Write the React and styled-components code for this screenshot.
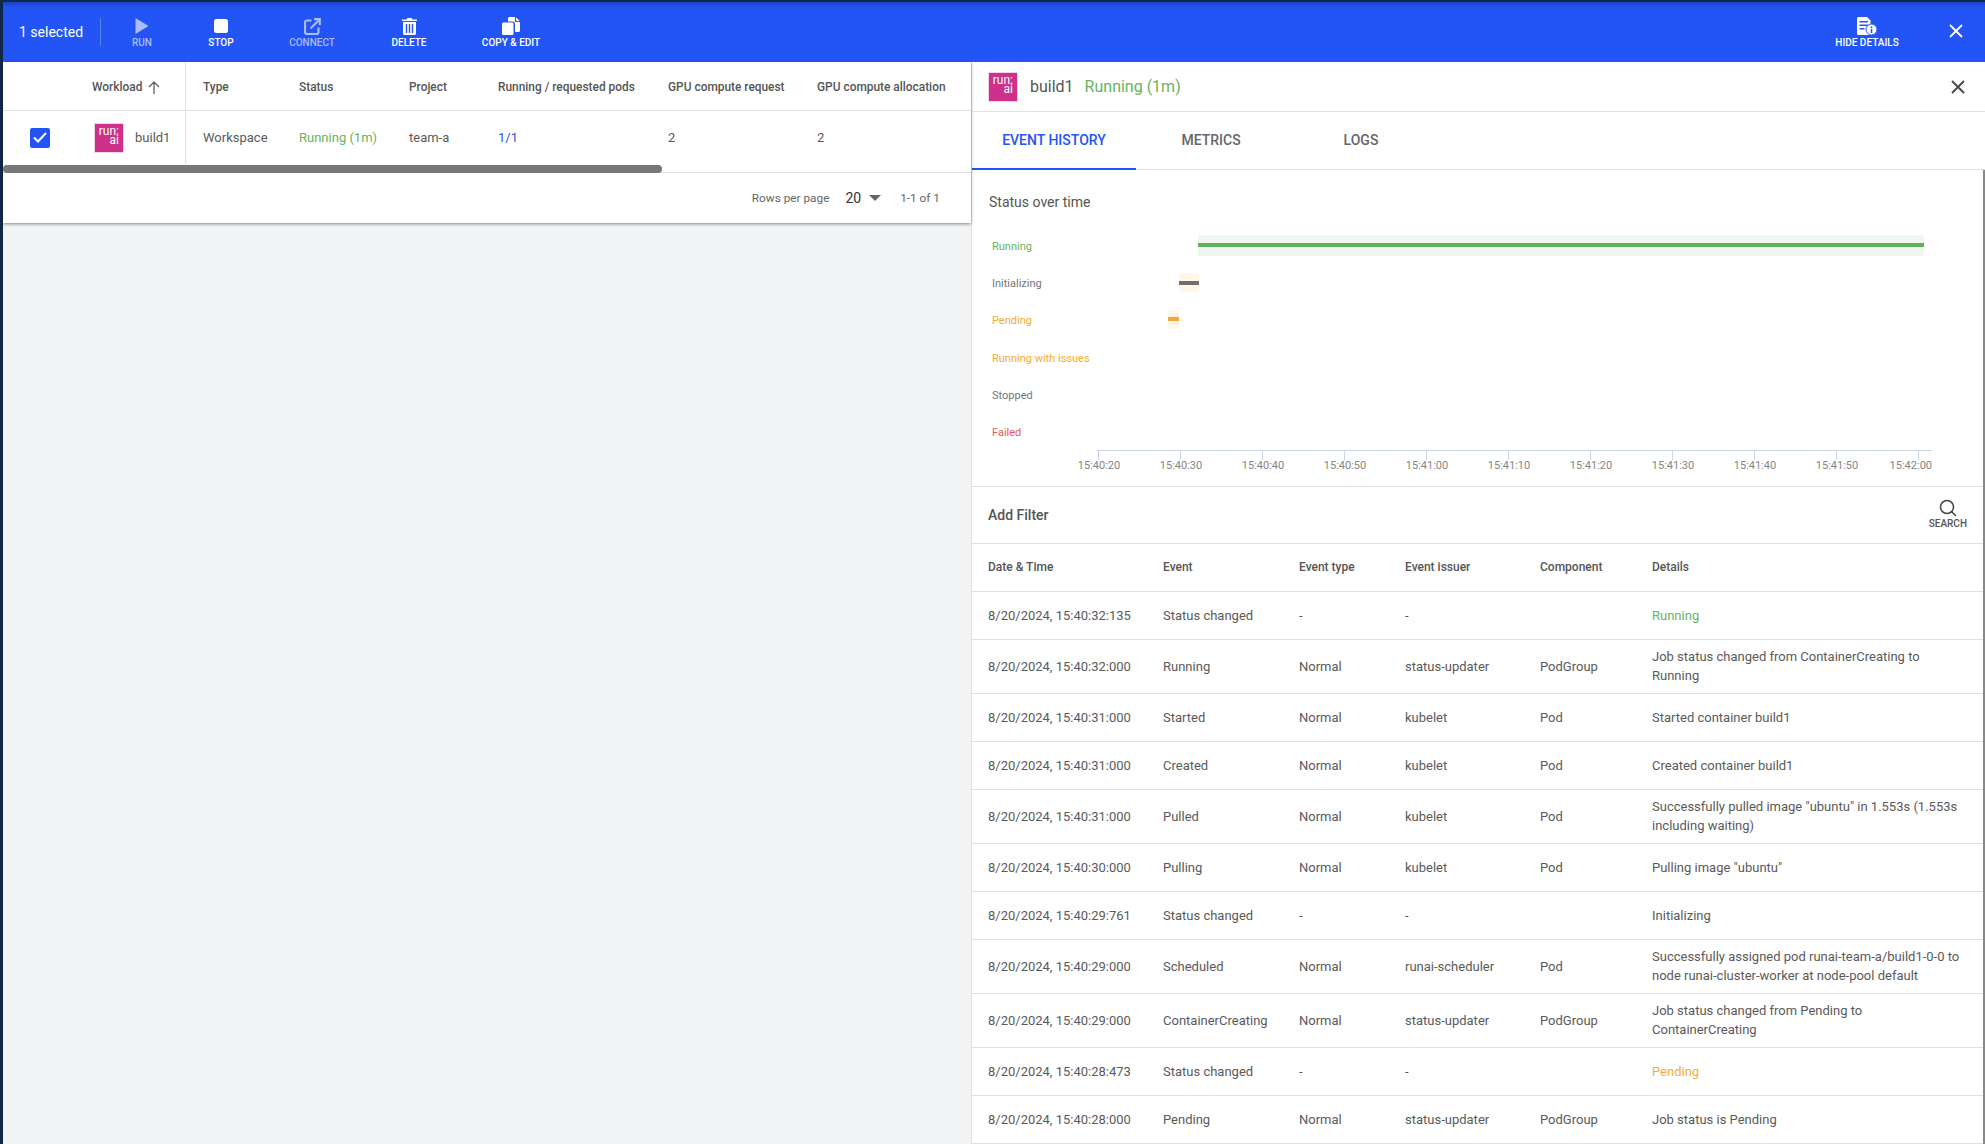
import React from 'react';
import styled, { createGlobalStyle } from 'styled-components';

const GlobalStyle = createGlobalStyle`
    html, body {
        margin: 0;
        height: 100%;
        overflow: hidden;
    }
    body {
        font-family: Roboto, "Liberation Sans", sans-serif;
    }
    * {
        box-sizing: border-box;
    }
`;

const PageWrapper = styled.div`
    display: flex;
    flex-direction: column;
    height: 1144px;
    border-top: 2px solid #10284a;
    border-left: 3px solid #10284a;
    background: #f2f3f5;
`;

const ToolbarWrapper = styled.div`
    display: flex;
    align-items: flex-start;
    flex: 0 0 60px;
    padding-left: 16px;
    background: #2354f5;
    box-shadow: inset 0 5px 4px -3px rgba(10, 30, 90, 0.35);
    color: #fff;
`;

const SelectedLabel = styled.div`
    width: 82px;
    height: 28px;
    margin: 16px 5px 0 0;
    border-right: 1px solid rgba(255, 255, 255, 0.25);
    font-size: 14px;
    line-height: 28px;
`;

const ToolButton = styled.div`
    display: flex;
    flex-direction: column;
    align-items: center;
    width: ${({ $width }) => $width}px;
    padding-top: 14px;
    color: ${({ $disabled }) => ($disabled ? '#a9bdfb' : '#fff')};
    font-size: 10px;
    font-weight: 500;
    line-height: 14px;
    text-transform: uppercase;
`;

const ToolIcon = styled.div`
    display: flex;
    align-items: center;
    justify-content: center;
    height: 20px;
`;

const ToolSpacer = styled.div`
    flex: 1;
`;

const ToolClose = styled.div`
    display: flex;
    justify-content: center;
    width: 24px;
    margin: 22px 17px 0 27px;
`;

const ContentWrapper = styled.div`
    display: flex;
    flex: 1;
    min-height: 0;
`;

const ListColumn = styled.div`
    flex: 0 0 968px;
`;

const ListCard = styled.div`
    position: relative;
    height: 161px;
    background: #fff;
    box-shadow: 0 1px 3px rgba(0, 0, 0, 0.45);
`;

const ListRow = styled.div`
    display: grid;
    grid-template-columns: 89px 94px 113px 110px 89px 170px 149px 1fr;
    align-items: stretch;
    height: ${({ $height }) => $height}px;
    padding-bottom: ${({ $gutter }) => $gutter || 0}px;
    border-bottom: 1px solid #e0e0e0;
`;

const ListHead = styled.div`
    display: flex;
    align-items: center;
    gap: 6px;
    padding: 2px 0 0 ${({ $pad }) => $pad || 0}px;
    border-right: ${({ $divider }) => ($divider ? '1px solid #e0e0e0' : 'none')};
    color: #555;
    font-size: 11.9px;
    font-weight: 500;
`;

const ListCell = styled.div`
    display: flex;
    align-items: center;
    justify-content: ${({ $center }) => ($center ? 'center' : 'flex-start')};
    gap: 11px;
    padding-left: ${({ $pad }) => $pad || 0}px;
    border-right: ${({ $divider }) => ($divider ? '1px solid #e0e0e0' : 'none')};
    color: ${({ $color }) => $color || '#5a5a5a'};
    font-size: 13px;
`;

const Checkbox = styled.div`
    display: flex;
    align-items: center;
    justify-content: center;
    width: 20px;
    height: 20px;
    margin: 0 15px 0 0;
    border-radius: 2px;
    background: #2354f5;
`;

const Logo = styled.div`
    display: flex;
    flex: 0 0 30px;
    flex-direction: column;
    align-items: flex-end;
    justify-content: center;
    width: 30px;
    height: 30px;
    padding: 0 4px 3px 0;
    border: 1px solid #f3d3e6;
    background: #cd3189;
    color: #fff;
    font-size: 12px;
    line-height: 9px;
`;

const ScrollThumb = styled.div`
    position: absolute;
    left: 0;
    top: 103px;
    width: 659px;
    height: 8px;
    border-radius: 4px;
    background: #777;
`;

const ListFooter = styled.div`
    display: flex;
    align-items: center;
    justify-content: flex-end;
    height: 50px;
    padding-right: 31px;
    color: #666;
    font-size: 11.8px;
`;

const PageSize = styled.span`
    margin: 0 8px 0 16px;
    color: #333;
    font-size: 14px;
`;

const Caret = styled.span`
    width: 0;
    height: 0;
    margin-right: 19px;
    border-left: 6px solid transparent;
    border-right: 6px solid transparent;
    border-top: 6px solid #666;
`;

const DetailPanel = styled.div`
    flex: 1;
    min-width: 0;
    overflow: hidden;
    border-left: 1px solid #e0e0e0;
    background: #fff;
`;

const DetailHeader = styled.div`
    display: flex;
    align-items: center;
    height: 50px;
    padding: 0 20px 0 16px;
    border-bottom: 1px solid #e0e0e0;
    font-size: 16px;
`;

const DetailName = styled.span`
    margin: 0 11px 0 12px;
    color: #555;
`;

const DetailStatus = styled.span`
    flex: 1;
    color: #66b35f;
`;

const TabsRow = styled.div`
    display: flex;
    height: 58px;
    border-bottom: 1px solid #e0e0e0;
`;

const Tab = styled.div`
    display: flex;
    align-items: center;
    justify-content: center;
    width: ${({ $width }) => $width}px;
    height: 58px;
    border-bottom: 2px solid ${({ $active }) => ($active ? '#2354f5' : 'transparent')};
    color: ${({ $active }) => ($active ? '#2354f5' : '#666')};
    font-size: 14px;
    font-weight: 500;
`;

const PanelBody = styled.div`
    height: 974px;
    border-right: 2px solid #888;
`;

const ChartSection = styled.div`
    height: 317px;
    padding-top: 22px;
    border-bottom: 1px solid #e0e0e0;
`;

const ChartTitle = styled.div`
    padding-left: 17px;
    color: #555;
    font-size: 14px;
    line-height: 20px;
`;

const ChartGrid = styled.div`
    display: grid;
    grid-template-columns: 118px 1fr;
    margin-top: 15px;
`;

const ChartLabels = styled.div`
    display: flex;
    flex-direction: column;
    padding: 1px 0 0 20px;
    white-space: nowrap;
`;

const ChartLabel = styled.div`
    height: 37.2px;
    color: ${({ $color }) => $color};
    font-size: 11px;
    line-height: 37px;
`;

const ChartSvg = styled.svg`
    overflow: visible;
`;

const FilterBar = styled.div`
    display: flex;
    align-items: center;
    justify-content: space-between;
    height: 57px;
    padding: 0 16px 0 16px;
    border-bottom: 1px solid #e0e0e0;
    color: #555;
    font-size: 14px;
    font-weight: 500;
`;

const SearchButton = styled.div`
    display: flex;
    flex-direction: column;
    align-items: center;
    color: #555;
    font-size: 10px;
    font-weight: 500;
    line-height: 14px;
`;

const EventRow = styled.div`
    display: grid;
    grid-template-columns: 175px 136px 106px 135px 112px 312px;
    align-items: center;
    height: ${({ $tall }) => ($tall ? 54 : 48)}px;
    padding-left: 16px;
    border-bottom: 1px solid #e0e0e0;
    color: #5a5a5a;
    font-size: 13px;
    line-height: 19px;
`;

const EventHead = styled(EventRow)`
    color: #555;
    font-size: 12px;
    font-weight: 500;
`;

const Details = styled.div`
    padding-bottom: ${({ $tall }) => ($tall ? 2 : 0)}px;
    color: ${({ $color }) => $color || 'inherit'};
`;

const RunIcon = () => (
    <svg width="14" height="16" viewBox="0 0 14 16">
        <path d="M0.5 0 L13.5 8 L0.5 16 Z" fill="currentColor" />
    </svg>
);

const StopIcon = () => (
    <svg width="14" height="14" viewBox="0 0 14 14">
        <rect width="14" height="14" rx="2.5" fill="currentColor" />
    </svg>
);

const ConnectIcon = () => (
    <svg width="17" height="17" viewBox="0 0 17 17" fill="none" stroke="currentColor" strokeWidth="2.200">
        <path d="M7.500 2.500H3c-1.100 0-2 .9-2 2V14c0 1.100.9 2 2 2h9.500c1.100 0 2-.9 2-2V9.500" />
        <path d="M6.500 10.500 L15 2 M10 1.200 H15.800 V7" />
    </svg>
);

const DeleteIcon = () => (
    <svg width="15" height="18" viewBox="0 0 15 18" fill="currentColor">
        <path d="M0 2.500h4.500L5.500 1h4l1 1.500H15V4H0z" />
        <path
            fillRule="evenodd"
            d="M1 5h13v11.500c0 .8-.7 1.500-1.500 1.500h-10C1.700 18 1 17.300 1 16.500zM3.800 7v9h1.400V7zM6.800 7v9h1.400V7zM9.800 7v9h1.400V7z"
        />
    </svg>
);

const CopyIcon = () => (
    <svg width="18" height="18" viewBox="0 0 18 18" fill="currentColor">
        <path d="M7.500 0H13v5h5v8.500c0 .8-.7 1.500-1.500 1.500H13V7c0-1.500-1-2.500-2.500-2.500H6V1.500C6 .7 6.700 0 7.500 0z" />
        <path d="M14 0.300 L17.700 4 H14z" />
        <path d="M1.500 5.500h8.500c.8 0 1.500.7 1.500 1.500v9.500c0 .8-.7 1.500-1.500 1.500H1.500C.7 18 0 17.300 0 16.500V7c0-.8.7-1.500 1.500-1.500z" />
    </svg>
);

const DetailsIcon = () => (
    <svg width="20" height="18" viewBox="0 0 20 18">
        <path
            d="M1.500 0H10l3.500 3.500V16.500c0 .8-.7 1.500-1.500 1.500H1.500C.7 18 0 17.300 0 16.500V1.500C0 .7.700 0 1.500 0z"
            fill="#fff"
        />
        <path d="M2.500 4h8.500v1.500H2.500zM2.500 7.500h8.500V9H2.500zM2.500 11h5v1.500h-5z" fill="#2354f5" />
        <circle cx="14.500" cy="12.500" r="5.500" fill="#fff" stroke="#2354f5" strokeWidth="1" />
        <path d="M13.700 9.500h1.600v1.500h-1.600zM13.700 11.800h1.600V16h-1.600z" fill="#2354f5" />
    </svg>
);

const CloseIcon = ({ color }) => (
    <svg width="14" height="14" viewBox="0 0 14 14" stroke={color} strokeWidth="1.800" fill="none">
        <path d="M1 1 L13 13 M13 1 L1 13" />
    </svg>
);

const SortArrow = () => (
    <svg width="12" height="13" viewBox="0 0 12 13" stroke="#555" strokeWidth="1.200" fill="none">
        <path d="M6 13 V1 M1 6 L6 1 L11 6" />
    </svg>
);

const CheckMark = () => (
    <svg width="14" height="11" viewBox="0 0 14 11" stroke="#fff" strokeWidth="2" fill="none">
        <path d="M1 5.500 L5 9.500 L13 1" />
    </svg>
);

const SearchIcon = () => (
    <svg width="18" height="18" viewBox="0 0 18 18" stroke="#444" strokeWidth="1.500" fill="none">
        <circle cx="8" cy="8" r="6.500" />
        <path d="M12.500 12.500 L17 17" />
    </svg>
);

const RunaiLogo = () => (
    <Logo>
        <span>run:</span>
        <span>ai</span>
    </Logo>
);

const chartLabels = [
    ['Running', '#66b35f'],
    ['Initializing', '#757575'],
    ['Pending', '#f5ab35'],
    ['Running with issues', '#f5ab35'],
    ['Stopped', '#757575'],
    ['Failed', '#e25a5a'],
];

const ticks = [
    '15:40:20',
    '15:40:30',
    '15:40:40',
    '15:40:50',
    '15:41:00',
    '15:41:10',
    '15:41:20',
    '15:41:30',
    '15:41:40',
    '15:41:50',
    '15:42:00',
];

const StatusChart = () => (
    <ChartSvg width="850" height="253" viewBox="0 0 850 253">
        <rect x="108" y="8" width="726" height="21" rx="3" fill="#eff6ef" />
        <rect x="108" y="16" width="726" height="4" fill="#62ae5a" />
        <rect x="89" y="46" width="20" height="19" rx="3" fill="#fff6e8" />
        <rect x="89" y="54" width="20" height="4" fill="#6f6f6f" />
        <rect x="78" y="83" width="11" height="19" rx="3" fill="#fff6e8" />
        <rect x="78" y="90" width="11" height="4" fill="#f2a93b" />
        <path d="M7 223.500 H842" stroke="#c9d3ea" strokeWidth="1" />
        {ticks.map((tick, i) => (
            <g key={tick}>
                <path d={`M${8.5 + 82 * i} 223 V233`} stroke="#c9d3ea" strokeWidth="1" />
                <text
                    x={i === 10 ? 842 : 9 + 82 * i}
                    y="242"
                    textAnchor={i === 10 ? 'end' : 'middle'}
                    fontSize="11"
                    fill="#858585"
                >
                    {tick}
                </text>
            </g>
        ))}
    </ChartSvg>
);

const events = [
    ['8/20/2024, 15:40:32:135', 'Status changed', '-', '-', '', 'Running', '#66b35f'],
    ['8/20/2024, 15:40:32:000', 'Running', 'Normal', 'status-updater', 'PodGroup', 'Job status changed from ContainerCreating to Running', null, true],
    ['8/20/2024, 15:40:31:000', 'Started', 'Normal', 'kubelet', 'Pod', 'Started container build1'],
    ['8/20/2024, 15:40:31:000', 'Created', 'Normal', 'kubelet', 'Pod', 'Created container build1'],
    ['8/20/2024, 15:40:31:000', 'Pulled', 'Normal', 'kubelet', 'Pod', 'Successfully pulled image "ubuntu" in 1.553s (1.553s including waiting)', null, true],
    ['8/20/2024, 15:40:30:000', 'Pulling', 'Normal', 'kubelet', 'Pod', 'Pulling image "ubuntu"'],
    ['8/20/2024, 15:40:29:761', 'Status changed', '-', '-', '', 'Initializing'],
    ['8/20/2024, 15:40:29:000', 'Scheduled', 'Normal', 'runai-scheduler', 'Pod', 'Successfully assigned pod runai-team-a/build1-0-0 to node runai-cluster-worker at node-pool default', null, true],
    ['8/20/2024, 15:40:29:000', 'ContainerCreating', 'Normal', 'status-updater', 'PodGroup', 'Job status changed from Pending to ContainerCreating', null, true],
    ['8/20/2024, 15:40:28:473', 'Status changed', '-', '-', '', 'Pending', '#f5ab35'],
    ['8/20/2024, 15:40:28:000', 'Pending', 'Normal', 'status-updater', 'PodGroup', 'Job status is Pending'],
];

const App = () => {
    return (
        <PageWrapper>
            <GlobalStyle />
            <ToolbarWrapper>
                <SelectedLabel>1 selected</SelectedLabel>
                <ToolButton $width={72} $disabled>
                    <ToolIcon><RunIcon /></ToolIcon>
                    Run
                </ToolButton>
                <ToolButton $width={86}>
                    <ToolIcon><StopIcon /></ToolIcon>
                    Stop
                </ToolButton>
                <ToolButton $width={96} $disabled>
                    <ToolIcon><ConnectIcon /></ToolIcon>
                    Connect
                </ToolButton>
                <ToolButton $width={98}>
                    <ToolIcon><DeleteIcon /></ToolIcon>
                    Delete
                </ToolButton>
                <ToolButton $width={106}>
                    <ToolIcon><CopyIcon /></ToolIcon>
                    Copy &amp; Edit
                </ToolButton>
                <ToolSpacer />
                <ToolButton $width={100}>
                    <ToolIcon><DetailsIcon /></ToolIcon>
                    Hide details
                </ToolButton>
                <ToolClose><CloseIcon color="#fff" /></ToolClose>
            </ToolbarWrapper>
            <ContentWrapper>
                <ListColumn>
                    <ListCard>
                        <ListRow $height={49}>
                            <ListHead />
                            <ListHead $divider>Workload <SortArrow /></ListHead>
                            <ListHead $pad={17}>Type</ListHead>
                            <ListHead>Status</ListHead>
                            <ListHead>Project</ListHead>
                            <ListHead>Running / requested pods</ListHead>
                            <ListHead>GPU compute request</ListHead>
                            <ListHead>GPU compute allocation</ListHead>
                        </ListRow>
                        <ListRow $height={62} $gutter={8}>
                            <ListCell $center>
                                <Checkbox><CheckMark /></Checkbox>
                            </ListCell>
                            <ListCell $divider $pad={2}>
                                <RunaiLogo />
                                build1
                            </ListCell>
                            <ListCell $pad={17}>Workspace</ListCell>
                            <ListCell $color="#66b35f">Running (1m)</ListCell>
                            <ListCell>team-a</ListCell>
                            <ListCell $color="#2354f5">1/1</ListCell>
                            <ListCell>2</ListCell>
                            <ListCell>2</ListCell>
                        </ListRow>
                        <ScrollThumb />
                        <ListFooter>
                            Rows per page
                            <PageSize>20</PageSize>
                            <Caret />
                            1-1 of 1
                        </ListFooter>
                    </ListCard>
                </ListColumn>
                <DetailPanel>
                    <DetailHeader>
                        <RunaiLogo />
                        <DetailName>build1</DetailName>
                        <DetailStatus>Running (1m)</DetailStatus>
                        <CloseIcon color="#444" />
                    </DetailHeader>
                    <TabsRow>
                        <Tab $width={164} $active>EVENT HISTORY</Tab>
                        <Tab $width={150}>METRICS</Tab>
                        <Tab $width={150}>LOGS</Tab>
                    </TabsRow>
                    <PanelBody>
                        <ChartSection>
                            <ChartTitle>Status over time</ChartTitle>
                            <ChartGrid>
                                <ChartLabels>
                                    {chartLabels.map(([label, color]) => (
                                        <ChartLabel key={label} $color={color}>{label}</ChartLabel>
                                    ))}
                                </ChartLabels>
                                <StatusChart />
                            </ChartGrid>
                        </ChartSection>
                        <FilterBar>
                            Add Filter
                            <SearchButton>
                                <SearchIcon />
                                SEARCH
                            </SearchButton>
                        </FilterBar>
                        <EventHead>
                            <div>Date &amp; Time</div>
                            <div>Event</div>
                            <div>Event type</div>
                            <div>Event issuer</div>
                            <div>Component</div>
                            <div>Details</div>
                        </EventHead>
                        {events.map(([date, event, type, issuer, component, details, color, tall], i) => (
                            <EventRow key={i} $tall={tall}>
                                <div>{date}</div>
                                <div>{event}</div>
                                <div>{type}</div>
                                <div>{issuer}</div>
                                <div>{component}</div>
                                <Details $color={color} $tall={tall}>{details}</Details>
                            </EventRow>
                        ))}
                    </PanelBody>
                </DetailPanel>
            </ContentWrapper>
        </PageWrapper>
    );
};

export default App;
